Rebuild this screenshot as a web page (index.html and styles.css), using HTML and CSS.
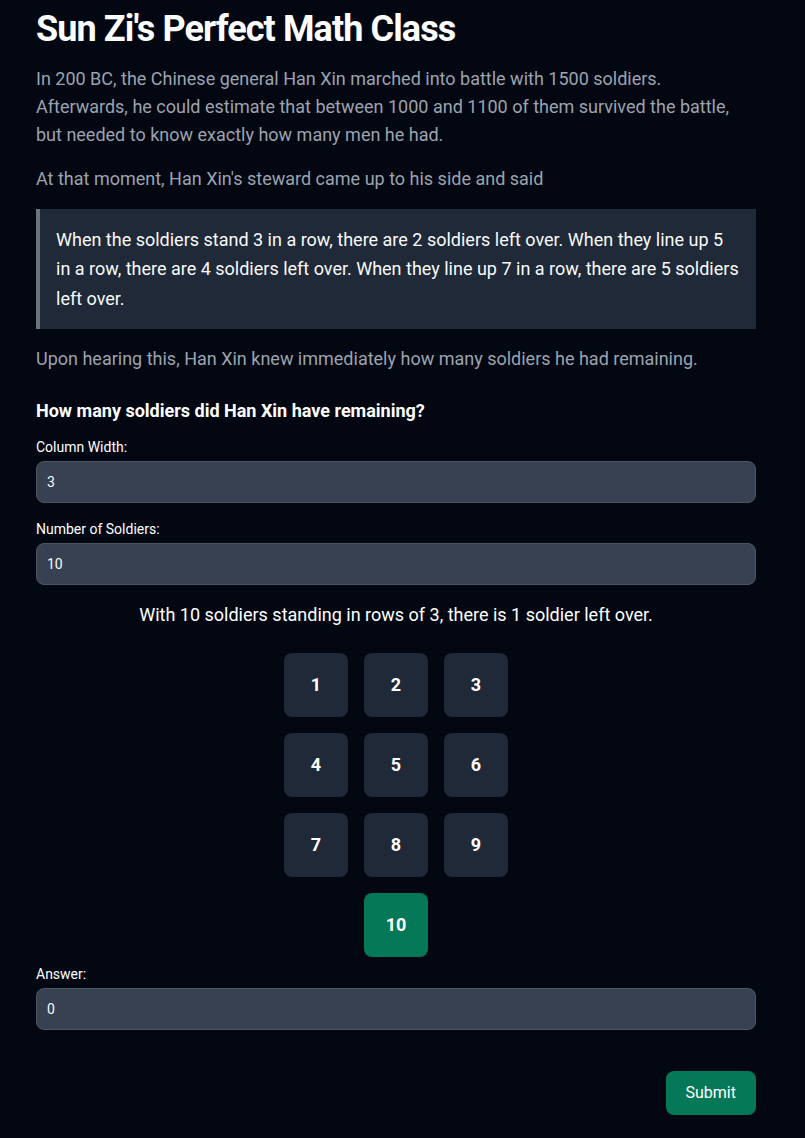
FILE: index.html
```html
<!DOCTYPE html>
<html lang="en">
<head>
<meta charset="utf-8">
<title>Sun Zi's Perfect Math Class</title>
<link rel="stylesheet" href="styles.css">
</head>
<body>
<main class="page">
  <h1 class="title">Sun Zi's Perfect Math Class</h1>
  <p class="text">In 200 BC, the Chinese general Han Xin marched into battle with 1500 soldiers. Afterwards, he could estimate that between 1000 and 1100 of them survived the battle, but needed to know exactly how many men he had.</p>
  <p class="text">At that moment, Han Xin's steward came up to his side and said</p>
  <blockquote class="quote">When the soldiers stand 3 in a row, there are 2 soldiers left over. When they line up 5 in a row, there are 4 soldiers left over. When they line up 7 in a row, there are 5 soldiers left over.</blockquote>
  <p class="text">Upon hearing this, Han Xin knew immediately how many soldiers he had remaining.</p>
  <h2 class="question">How many soldiers did Han Xin have remaining?</h2>
  <form class="form">
    <label class="label" for="cw">Column Width:</label>
    <input class="input" id="cw" type="text" value="3">
    <label class="label" for="ns">Number of Soldiers:</label>
    <input class="input" id="ns" type="text" value="10">
    <p class="result">With 10 soldiers standing in rows of 3, there is 1 soldier left over.</p>
    <div class="grid">
      <div class="cell">1</div><div class="cell">2</div><div class="cell">3</div>
      <div class="cell">4</div><div class="cell">5</div><div class="cell">6</div>
      <div class="cell">7</div><div class="cell">8</div><div class="cell">9</div>
      <div class="cell cell-empty"></div><div class="cell cell-extra">10</div>
    </div>
    <label class="label" for="ans">Answer:</label>
    <input class="input" id="ans" type="text" value="0">
    <div class="actions">
      <button class="submit" type="button">Submit</button>
    </div>
  </form>
</main>
</body>
</html>
```

FILE: styles.css
```css
* { box-sizing: border-box; }
html, body { margin: 0; padding: 0; }
body {
  background: #030712;
  color: #f9fafb;
  font-family: Roboto, "Liberation Sans", sans-serif;
}
.page {
  width: 720px;
  margin-left: 36px;
  padding: 9px 0 24px;
}
.title {
  margin: 0 0 16px;
  font-size: 36px;
  line-height: 40px;
  font-weight: 700;
  letter-spacing: -0.025em;
  color: #ffffff;
}
.text {
  margin: 0 0 16px;
  font-size: 18px;
  line-height: 28px;
  color: #9ca3af;
}
.quote {
  margin: 0 0 16px;
  padding: 16px;
  background: #1f2937;
  border-left: 4px solid #6b7280;
  font-size: 18px;
  line-height: 1.625;
  color: #f9fafb;
}
.question {
  margin: 24px 0 12px;
  font-size: 18px;
  line-height: 28px;
  font-weight: 700;
  color: #ffffff;
}
.form {
  display: flex;
  flex-direction: column;
}
.label {
  font-size: 14px;
  line-height: 20px;
  margin-bottom: 4px;
  color: #ffffff;
}
.input {
  height: 42px;
  margin: 0 0 16px;
  padding: 0 10px;
  background: #374151;
  border: 1px solid #4b5563;
  border-radius: 8px;
  color: #f9fafb;
  font-family: inherit;
  font-size: 14px;
}
.result {
  margin: 0 0 24px;
  text-align: center;
  font-size: 18px;
  line-height: 28px;
  color: #ffffff;
}
.grid {
  display: grid;
  grid-template-columns: repeat(3, 64px);
  gap: 16px;
  justify-content: center;
  margin-bottom: 7px;
}
.cell {
  height: 64px;
  border-radius: 8px;
  background: #1f2937;
  display: flex;
  align-items: center;
  justify-content: center;
  font-size: 18px;
  font-weight: 700;
  color: #ffffff;
}
.cell-empty { background: transparent; }
.cell-extra { background: #047857; }
.actions {
  display: flex;
  justify-content: flex-end;
  margin-top: 25px;
}
.submit {
  height: 44px;
  padding: 0 20px;
  border: none;
  border-radius: 8px;
  background: #047857;
  color: #ffffff;
  font-family: inherit;
  font-size: 16px;
}
```
